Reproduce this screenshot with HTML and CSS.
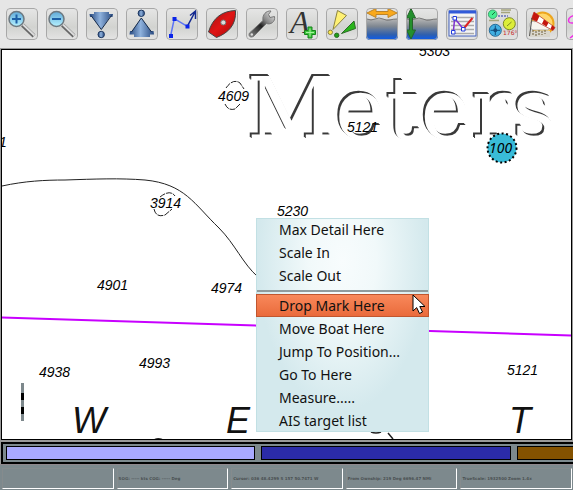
FILE: index.html
```html
<!DOCTYPE html>
<html lang="en">
<head>
<meta charset="utf-8">
<title>Chart plotter</title>
<link rel="stylesheet" href="styles.css">
</head>
<body>
<svg class="defs" aria-hidden="true">
  <defs>
    <linearGradient id="lens" x1="0" y1="0" x2="0" y2="1"><stop offset="0" stop-color="#5fa9d8"/><stop offset="1" stop-color="#b5f1ff"/></linearGradient>
    <linearGradient id="steel" x1="0" y1="0" x2="1" y2="0"><stop offset="0" stop-color="#26487f"/><stop offset=".45" stop-color="#8fb2dd"/><stop offset="1" stop-color="#26487f"/></linearGradient>
    <linearGradient id="hull" x1="0" y1="0" x2="1" y2="1"><stop offset="0" stop-color="#9c1515"/><stop offset=".5" stop-color="#e01515"/><stop offset="1" stop-color="#a00808"/></linearGradient>
    <linearGradient id="sea" x1="0" y1="0" x2="0" y2="1"><stop offset="0" stop-color="#b4b4b4"/><stop offset=".35" stop-color="#7f8791"/><stop offset=".75" stop-color="#2e5fae"/><stop offset="1" stop-color="#0a5cf0"/></linearGradient>
    <linearGradient id="wrench" x1="0" y1="1" x2="1" y2="0"><stop offset="0" stop-color="#888"/><stop offset=".45" stop-color="#222"/><stop offset=".65" stop-color="#888"/><stop offset="1" stop-color="#eee"/></linearGradient>
  </defs>
</svg>

<nav class="toolbar" aria-label="Chart tools">
  <button class="tool" aria-label="Zoom in"><svg viewBox="0 0 32 32"><path d="M16.500 17L28 28" stroke="#666" stroke-width="4"/><path d="M17 16.500L28.500 27.500" stroke="#ddd" stroke-width="2"/><circle cx="10.500" cy="11" r="7.500" fill="url(#lens)" stroke="#6c7880" stroke-width="1.500"/><path d="M6 11H15M10.500 6.500V15.500" stroke="#1d5fa5" stroke-width="2"/></svg></button>
  <button class="tool" aria-label="Zoom out"><svg viewBox="0 0 32 32"><path d="M16.500 17L28 28" stroke="#666" stroke-width="4"/><path d="M17 16.500L28.500 27.500" stroke="#ddd" stroke-width="2"/><circle cx="10.500" cy="11" r="7.500" fill="url(#lens)" stroke="#6c7880" stroke-width="1.500"/><path d="M6 11H15" stroke="#1d5fa5" stroke-width="2"/></svg></button>
  <button class="tool" aria-label="Scale in"><svg viewBox="0 0 32 32"><path d="M8 4H23V6H27L26.500 9H24L15.300 21.500L6 9H4L3.500 6H8Z" fill="url(#steel)"/><path d="M5 7.500L15.300 21.500L25.500 7.500" fill="none" stroke="#172b49"/><circle cx="15.200" cy="26.500" r="3.200" fill="url(#steel)" stroke="#1c355d"/></svg></button>
  <button class="tool" aria-label="Scale out"><svg viewBox="0 0 32 32"><path d="M15.300 10L25 23H27.500L28 26.500H24V29H8V26.500H3.500L4 23H6Z" fill="url(#steel)"/><path d="M5.500 24L15.300 10L25.500 24" fill="none" stroke="#172b49"/><circle cx="15.300" cy="5.300" r="3.200" fill="url(#steel)" stroke="#1c355d"/></svg></button>
  <button class="tool" aria-label="Route"><svg viewBox="0 0 32 32"><path d="M4.700 27.500L8.300 10.700L21.300 18.300" fill="none" stroke="#5b74f5" stroke-width="1.500"/><path d="M21.300 18.300L29 4M24 7.500L29.500 3L29.500 11" fill="none" stroke="#152a91" stroke-width="1.500"/><path d="M3 26h4v4h-4zM6.500 9h4v4h-4zM19.500 16.500h4v4h-4z" fill="#0a24e8"/></svg></button>
  <button class="tool" aria-label="Own ship"><svg viewBox="0 0 32 32"><path d="M29.500 2.500C17 3 7 9 2.500 24L10.500 29.500C22 25 30.500 17 29.500 2.500Z" fill="url(#hull)" stroke="#444"/><circle cx="17.300" cy="14.500" r="2.500" fill="#ddd" stroke="#777"/></svg></button>
  <button class="tool" aria-label="Settings"><svg viewBox="0 0 32 32"><path d="M3.500 25L17 12.500C16 7 20 2.500 25 3L22.500 6.500L24 9.500L28.500 8.500C29.500 14 24.500 17 20.500 15.500L8 28C4.500 30.500 2 28 3.500 25Z" fill="url(#wrench)" stroke="#777"/><circle cx="5.800" cy="26.500" r="1.200" fill="#ddd"/></svg></button>
  <button class="tool" aria-label="Add text"><svg viewBox="0 0 32 32"><text x="4" y="25" class="letter">A</text><path d="M22 19h4v3.500h3.500v4H26V30h-4v-3.500h-3.500v-4H22Z" fill="#3cc43c" stroke="#16851b"/><path d="M20 24.500h8M24 20.500v8" stroke="#a6f29c"/></svg></button>
  <button class="tool" aria-label="AIS targets"><svg viewBox="0 0 32 32"><path d="M11.500 2.500L20.500 7.500L7 21.500Z" fill="#fff174" stroke="#8a8240"/><circle cx="4.300" cy="24.300" r="2.200" fill="#ffe94c" stroke="#8a8240"/><path d="M28 13L29.500 20.500L15.500 25.500Z" fill="#29b51b" stroke="#2c6b27"/><circle cx="10.700" cy="27.300" r="2.200" fill="#1f9f18" stroke="#2c6b27"/></svg></button>
  <button class="tool" aria-label="Currents"><svg viewBox="0 0 32 32"><rect y="11" width="32" height="21" fill="url(#sea)"/><path d="M1 11q4 2 8 0t8 0t7 1t7-1" fill="none" stroke="#777"/><path d="M1 5L10 .5V3.500H22V.5L31 5L22 9.500V6.500H10V9.500Z" fill="#f9a91c" stroke="#bd8428"/></svg></button>
  <button class="tool" aria-label="Tides"><svg viewBox="0 0 32 32"><rect y="11" width="32" height="21" fill="url(#sea)"/><path d="M1 11q4 2 8 0t8 0t7 1t7-1" fill="none" stroke="#777"/><path d="M5 .5L9.500 10H6.500V22H9.500L5 31L.5 22H3.500V10H.5Z" fill="#23902d" stroke="#26632b"/></svg></button>
  <button class="tool" aria-label="Route manager"><svg viewBox="0 0 32 32"><rect x="3" y="3" width="27" height="25" fill="#f4f4f4" stroke="#4360bd"/><path d="M3 4H30" stroke="#315ad8" stroke-width="3"/><path d="M5 9.500H28M5 13.500H28M5 17.500H28M5 21.500H28M5 25.500H28" stroke="#aaa" stroke-width="1.500"/><path d="M7.300 24.300L8.700 10.300L17.300 21" fill="none" stroke="#8133d0" stroke-width="1.500"/><path d="M17.300 21L26.500 10" stroke="#dc2424" stroke-width="2"/><path d="M5.500 22.500h3.500v3.500h-3.500zM7 8.500h3.500v3.500h-3.500zM15.500 19.500h3.500v3.500h-3.500z" fill="#fff" stroke="#233bdd"/></svg></button>
  <button class="tool" aria-label="Dashboard"><svg viewBox="0 0 32 32"><circle cx="6.700" cy="6.300" r="4.300" fill="#45ef91" stroke="#40a36d"/><path d="M6 7L9 4" stroke="#196b3d"/><path d="M15 2H25M15 4.500H24M3 12.500H13" stroke="#a5a57c" stroke-width="1.500"/><path d="M12 8H22" stroke="#6470b7" stroke-width="1.500" stroke-dasharray="2 1"/><circle cx="23.300" cy="15.700" r="6" fill="#dced39" stroke="#7e8923"/><path d="M21 18L25.500 14" stroke="#7e8923"/><circle cx="9.300" cy="22.300" r="6" fill="#42afe1" stroke="#276b98"/><path d="M4.500 22.300H14M9.300 17.500V27" stroke="#154e7c"/><circle cx="9.300" cy="22.300" r="2" fill="#154e7c"/><text x="17" y="27" class="reading">176°</text></svg></button>
  <button class="tool" aria-label="Weather fax"><svg viewBox="0 0 32 32"><circle cx="16.500" cy="15.500" r="11" fill="#ffd66b" stroke="#eda61e" stroke-width="2"/><path d="M4 18C3 14 7 12 9 14C12 10 19 13 19 16C24 15 26 20 22 22H7Q4 21 4 18Z" fill="#f7f4ec" stroke="#aaa"/><path d="M3 23H24V29H3Z" fill="#d9d6cc"/><path d="M7 22v6M10 23v5M13 22v6M16 23v4M19 22v4" stroke="#6b5a34" stroke-dasharray="2 1"/><path d="M5.500 11L8 4L29 19.500L27 22.500Z" fill="#fff" stroke="#aa2a1e" stroke-width=".7"/><path d="M5.500 11L8 4L13.500 8L11 13.500ZM18 11.500L22.500 14.700L20.500 18.500L16 15.800ZM26 17.200L29 19.500L27 22.500L24.500 21Z" fill="#c5160d"/><path d="M6 10L3.500 28" stroke="#555"/></svg></button>
  <button class="tool" aria-label="Tracks"><svg viewBox="0 0 32 32"><path d="M12 7C6 7 1 10 3 14C4 16 8 15 12 14M4 30L8 27" fill="none" stroke="#f02ee8" stroke-width="1.500"/></svg></button>
</nav>

<main class="chart">
  <span class="units">Meters</span>
  <svg class="plot" role="img" aria-label="Nautical chart">
    <g transform="translate(-2 -50)">
      <path d="M2 186C25 181 45 180 65 180C95 179 120 178 145 180C185 184 194 204 219 228C235 244 243 264 258 277" fill="none" stroke="#222"/>
      <path d="M2 317.500L571 335.500" stroke="#c800ff" stroke-width="2"/>
      <g fill="none" stroke="#222" stroke-dasharray="6 1">
        <path d="M226 88Q233 78 240 83L244 89M225 104Q228 111 235 109L240 104"/>
        <path d="M160 197Q170 189 175 196M154 209Q156 218 165 215L172 209"/>
      </g>
      <g class="sounding">
        <text x="419" y="56">5303</text>
        <text x="218" y="101">4609</text>
        <text x="347" y="132">5121</text>
        <text x="-1" y="147">1</text>
        <text x="150" y="208">3914</text>
        <text x="277" y="216">5230</text>
        <text x="97" y="290">4901</text>
        <text x="211" y="293">4974</text>
        <text x="139" y="368">4993</text>
        <text x="39" y="377">4938</text>
        <text x="507" y="375">5121</text>
      </g>
      <circle cx="502" cy="148" r="14.500" fill="#39bcd8" stroke="#000" stroke-width="2" stroke-dasharray="2 2.500"/>
      <text x="489" y="153" class="buoy">100</text>
      <g class="region">
        <text x="72" y="433">W</text>
        <text x="226" y="433">E</text>
        <text x="509" y="433">T</text>
      </g>
      <path d="M22.500 383V421" stroke="#7d888c" stroke-width="3"/>
      <path d="M22.500 393V400M22.500 407V414" stroke="#000" stroke-width="3"/>
      <path d="M155 439.500Q158 438 162 439.500M371 432Q376 434 381 432M388 433L393 439" fill="none" stroke="#222" stroke-width="1.500"/>
    </g>
  </svg>

  <ul class="menu">
    <li><button class="item">Max Detail Here</button></li>
    <li><button class="item">Scale In</button></li>
    <li><button class="item">Scale Out</button></li>
    <li class="rule" role="separator"></li>
    <li><button class="item active">Drop Mark Here</button></li>
    <li><button class="item">Move Boat Here</button></li>
    <li><button class="item">Jump To Position...</button></li>
    <li><button class="item">Go To Here</button></li>
    <li><button class="item">Measure.....</button></li>
    <li><button class="item">AIS target list</button></li>
  </ul>
  <svg class="pointer" viewBox="0 0 14 21" aria-hidden="true"><path d="M1 1V17L4.700 13.600L7.500 19.500L10.500 18L7.800 12.500H13Z" fill="#fff" stroke="#000"/></svg>
</main>

<div class="charts-bar">
  <button class="piece current" aria-label="Chart 1"></button>
  <button class="piece vector" aria-label="Chart 2"></button>
  <button class="piece other" aria-label="Chart 3"></button>
</div>

<footer class="status">
  <span class="cell"></span>
  <span class="cell">SOG: ----- kts COG: ----- Deg</span>
  <span class="cell">Cursor: 036 48.4299 S 157 50.7471 W</span>
  <span class="cell">From Ownship: 219 Deg 6696.47 NMi</span>
  <span class="cell">TrueScale: 1932500 Zoom 1.4x</span>
</footer>
</body>
</html>
```
FILE: styles.css
```css
* {
  box-sizing: border-box;
}

body {
  margin: 0;
  min-height: 100vh;
  display: flex;
  flex-direction: column;
  overflow: hidden;
  background: #999;
  font-family: "Noto Sans", sans-serif;
}

button {
  padding: 0;
  font: inherit;
}

.defs {
  position: absolute;
  width: 0;
  height: 0;
}

.toolbar {
  display: flex;
  gap: 8px;
  height: 48px;
  padding: 8px 6px;
  overflow: hidden;
  background: #e6e6e6;
}

.tool {
  position: relative;
  flex: none;
  width: 32px;
  height: 32px;
  border: 0;
  border-radius: 4px;
  overflow: hidden;
  background: linear-gradient(#e6e6e6, #d2d3d0 60%, #e4e4e4);
}

.tool::after {
  content: "";
  position: absolute;
  inset: 0;
  border: 1px solid #a8a8a8;
  border-radius: 4px;
}

.tool svg {
  display: block;
  width: 32px;
  height: 32px;
}

.letter {
  font: italic 32px "Liberation Serif", serif;
  fill: #333;
}

.reading {
  font: 6px "DejaVu Sans", sans-serif;
  fill: #c81e1e;
}

.chart {
  position: relative;
  flex: 1;
  min-height: 300px;
  margin: 1px 1px 2px;
  border: 1px solid #000;
  overflow: hidden;
  background: #fff;
}

.plot {
  position: absolute;
  inset: 0;
  width: 100%;
  height: 100%;
}

.units {
  position: absolute;
  left: 245px;
  top: 11px;
  font: 86px/96px "DejaVu Serif", serif;
  color: #fff;
  text-shadow: -1px -1px 0 #3a3a3a, -2px -2px 0 #3a3a3a;
}

.sounding {
  font: italic 14px "Liberation Sans", sans-serif;
}

.buoy {
  font: italic 14px "Noto Sans", sans-serif;
}

.region {
  font: italic 36px "Liberation Sans", sans-serif;
  fill: #111;
}

.menu {
  position: absolute;
  left: 254px;
  top: 168px;
  width: 173px;
  margin: 0;
  padding: 0;
  list-style: none;
  background: radial-gradient(ellipse 85px 150px at 50% 20%, #f8fcfd, #f1f9fa 40%, #d4e9ed);
  box-shadow: inset 0 0 0 1px #c2e0e4;
}

.item {
  display: block;
  width: 100%;
  height: 23px;
  padding-left: 23px;
  border: 0;
  background: none;
  color: #111;
  font-size: 14px;
  line-height: 23px;
  text-align: left;
}

.item.active {
  background: linear-gradient(#f98a5c, #e9693a);
  box-shadow: inset 0 0 0 1px #c0562f;
}

.rule {
  height: 7px;
  padding: 3px 1px 2px;
  background: #909b9d content-box;
}

.pointer {
  position: absolute;
  left: 410px;
  top: 244px;
  width: 14px;
  height: 21px;
}

.charts-bar {
  display: flex;
  gap: 6px;
  height: 22px;
  margin-left: 1px;
  padding: 2px 0 2px 3px;
  overflow: hidden;
  border: 2px solid #000;
  border-right: 0;
  background: #7d898d;
}

.piece {
  flex: none;
  width: 44%;
  height: 14px;
  border: 1px solid #000;
}

.current {
  background: #a9a9ff;
}

.vector {
  background: #2b2ba8;
}

.other {
  background: #845200;
}

.status {
  display: flex;
  gap: 3px;
  height: 26px;
  padding: 3px 1px 1px 2px;
  border-top: 1px solid #8f868b;
  background: #7d898d;
}

.cell {
  flex: 1 1 0;
  padding-left: 1px;
  overflow: hidden;
  white-space: nowrap;
  border: 1px solid #858b8d;
  border-right-color: #fff;
  border-bottom-color: #fff;
  color: #4b5153;
  font: bold 4px/20px "DejaVu Sans", sans-serif;
}
```
